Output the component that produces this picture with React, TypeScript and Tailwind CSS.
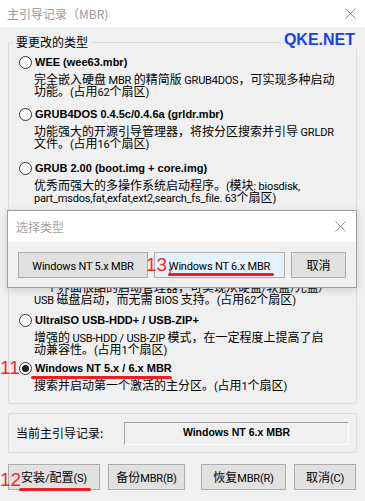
import * as React from 'react';

const cjk = "font-['Noto_Sans_CJK_SC',sans-serif]";
const bold = "font-['Liberation_Sans','Noto_Sans_CJK_SC',sans-serif] font-bold";

// latin runs in the Windows UI font are narrower than Noto's latin, so render them separately
const Mixed = ({ text }: { text: string }) => (
  <>
    {text.split(/([\u3000-\u9fff\uff00-\uffef]+)/).map((part, i) =>
      /[\u3000-\u9fff\uff00-\uffef]/.test(part) ? (
        <span key={i}>{part}</span>
      ) : (
        <span key={i} className="font-['Roboto',sans-serif] text-[11px] leading-[12px] tracking-[-0.2px]">
          {part}
        </span>
      ),
    )}
  </>
);

const CloseX = ({ color }: { color: string }) => (
  <svg width="11" height="11" viewBox="0 0 11 11" className="shrink-0">
    <path d="M0.5 0.5 L10.5 10.5 M10.5 0.5 L0.5 10.5" stroke={color} strokeWidth="1" />
  </svg>
);

type ItemProps = {
  label: string;
  lines: string[];
  checked?: boolean;
  className?: string;
};

const Item = ({ label, lines, checked, className }: ItemProps) => (
  <div className={className}>
    <div className="flex h-[12px] items-center">
      <span className="ml-[10px] flex h-[13px] w-[13px] shrink-0 items-center justify-center rounded-full border border-[#333] bg-white">
        {checked && <span className="h-[7px] w-[7px] rounded-full bg-[#1a1a1a]" />}
      </span>
      <span className={`ml-[3px] whitespace-nowrap text-[11px] leading-[12px] text-black ${bold}`}>{label}</span>
    </div>
    <div className="mt-[6px] pl-[25px] text-[12px] leading-[12px] text-black">
      {lines.map((l) => (
        <div key={l} className="flex h-[12px] items-center whitespace-nowrap">
          <span>
            <Mixed text={l} />
          </span>
        </div>
      ))}
    </div>
  </div>
);

const Btn = ({ label, className }: { label: string; className?: string }) => (
  <div
    className={`flex h-[26px] items-center justify-center whitespace-nowrap border border-[#adadad] bg-[#e1e1e1] text-[12px] leading-[14px] text-black ${className ?? ''}`}
  >
    <span>
      <Mixed text={label} />
    </span>
  </div>
);

export default function App() {
  return (
    <div className={`relative h-[501px] w-[365px] overflow-hidden bg-[#f0f0f0] ${cjk}`}>
      {/* title bar */}
      <div className="flex h-[27px] items-center justify-between bg-white pl-[7px] pr-[9px]">
        <span className="text-[12px] text-[#999]">主引导记录（MBR)</span>
        <CloseX color="#8a8a8a" />
      </div>

      <fieldset className="relative mx-[8px] mt-[7px] rounded-[2px] border border-[#dcdcdc] pb-[11px]">
        <legend className="ml-[4px] px-[3px] text-[12px] leading-[16px] text-black">要更改的类型</legend>
        <div className={`absolute right-[-2px] top-[-20px] bg-[#f0f0f0] pl-[2px] pr-[3px] text-[16px] leading-[19px] text-[#1740f0] ${bold}`}>
          QKE.NET
        </div>
        <Item
          className="mt-[6px]"
          label="WEE (wee63.mbr)"
          lines={['完全嵌入硬盘 MBR 的精简版 GRUB4DOS，可实现多种启动', '功能。(占用62个扇区)']}
        />
        <Item
          className="mt-[10px]"
          label="GRUB4DOS 0.4.5c/0.4.6a (grldr.mbr)"
          lines={['功能强大的开源引导管理器，将按分区搜索并引导 GRLDR', '文件。(占用16个扇区)']}
        />
        <Item
          className="mt-[12px]"
          label="GRUB 2.00 (boot.img + core.img)"
          lines={['优秀而强大的多操作系统启动程序。(模块: biosdisk,', 'part_msdos,fat,exfat,ext2,search_fs_file. 63个扇区)']}
        />
        <Item
          className="mt-[60px]"
          label="PlopBootManager 5.0.15"
          lines={['一个界面很酷的启动管理器，可实现从硬盘/软盘/光盘/', 'USB 磁盘启动，而无需 BIOS 支持。(占用62个扇区)']}
        />
        <Item
          className="mt-[8px]"
          label="UltraISO USB-HDD+ / USB-ZIP+"
          lines={['增强的 USB-HDD / USB-ZIP 模式，在一定程度上提高了启', '动兼容性。(占用1个扇区)']}
        />
        <Item
          className="mt-[6px]"
          checked
          label="Windows NT 5.x / 6.x MBR"
          lines={['搜索并启动第一个激活的主分区。(占用1个扇区)']}
        />
      </fieldset>

      {/* current MBR */}
      <div className="mx-[8px] mt-[9px] flex h-[40px] items-center rounded-[2px] border border-[#dcdcdc] pl-[7px]">
        <span className="w-[108px] text-[12px] text-black">当前主引导记录:</span>
        <div
          className={`flex h-[23px] w-[225px] items-center justify-center border-b border-l border-r border-t border-b-white border-l-[#a0a0a0] border-r-white border-t-[#a0a0a0] text-[10.5px] text-black ${bold}`}
        >
          Windows NT 6.x MBR
        </div>
      </div>

      {/* bottom buttons */}
      <div className="mt-[11px] flex px-[8px]">
        <Btn className="w-[92px]" label="安装/配置(S)" />
        <Btn className="ml-[8px] w-[77px]" label="备份MBR(B)" />
        <Btn className="ml-[16px] w-[85px]" label="恢复MBR(R)" />
        <Btn className="ml-[8px] w-[62px]" label="取消(C)" />
      </div>

      {/* select type dialog */}
      <div className="absolute left-[7px] top-[210px] flex h-[78px] w-[350px] flex-col border border-[#9c9c9c] bg-[#f0f0f0] shadow-[0_2px_8px_rgba(0,0,0,0.15)]">
        <div className="flex h-[31px] items-center justify-between bg-white pl-[8px] pr-[10px]">
          <span className="text-[12px] text-[#a3a3a3]">选择类型</span>
          <CloseX color="#9a9a9a" />
        </div>
        <div className="flex gap-[6px] pl-[10px] pt-[10px]">
          <Btn className="w-[130px]" label="Windows NT 5.x MBR" />
          <Btn className="w-[131px] border-[#0078d7] bg-[#e5f1fb]" label="Windows NT 6.x MBR" />
          <Btn className="w-[55px]" label="取消" />
        </div>
      </div>

      {/* annotations */}
      <span className="absolute left-[146px] top-[254px] font-['Liberation_Sans',sans-serif] text-[19px] leading-[22px] text-[#ee2a2a]">
        13,
      </span>
      <div className="absolute left-[168px] top-[273px] h-[3px] w-[106px] rounded-full bg-[#ee1c24]" />

      <span className="absolute left-[0px] top-[357px] font-['Liberation_Sans',sans-serif] text-[19px] leading-[22px] text-[#ee2a2a]">
        11
      </span>
      <div className="absolute left-[31px] top-[376px] h-[3px] w-[141px] rounded-full bg-[#ee1c24]" />

      <span className="absolute left-[0px] top-[469px] font-['Liberation_Sans',sans-serif] text-[19px] leading-[22px] text-[#ee2a2a]">
        12
      </span>
      <div className="absolute left-[19px] top-[488px] h-[3px] w-[72px] rounded-full bg-[#ee1c24]" />
    </div>
  );
}
